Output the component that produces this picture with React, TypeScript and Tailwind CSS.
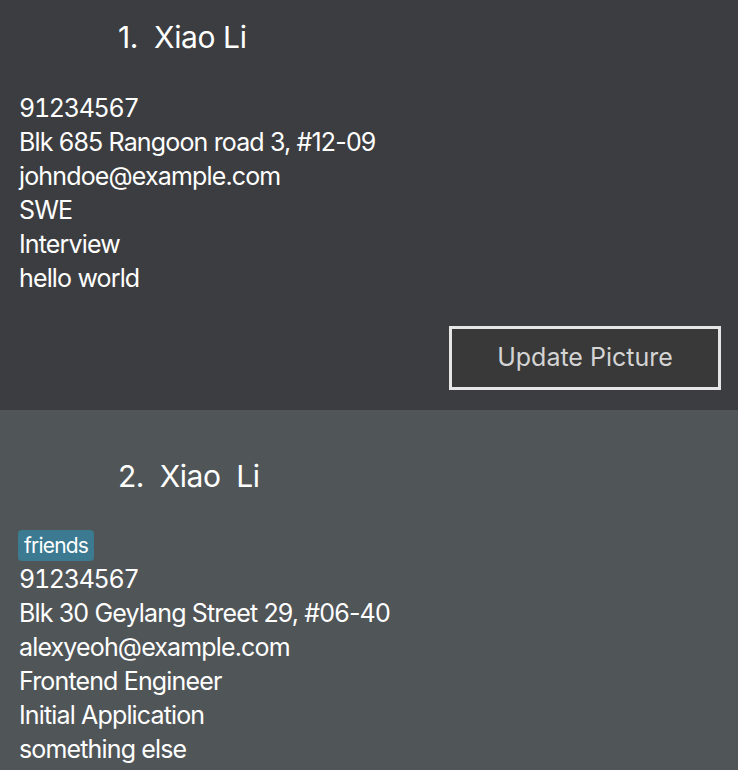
import React from "react";

const font = { fontFamily: "Inter, 'Noto Sans', sans-serif" };

function Line({ children, tab }: { children: React.ReactNode; tab?: boolean }) {
  return (
    <div
      className={
        tab
          ? "h-[34px] leading-[34px] text-[25px] tracking-[-1.3px] tabular-nums text-white whitespace-nowrap"
          : "h-[34px] leading-[34px] text-[25px] tracking-[-0.85px] text-white whitespace-nowrap"
      }
    >
      {children}
    </div>
  );
}

export default function App() {
  return (
    <div style={font} className="w-[738px] h-[770px] overflow-hidden">
      <div className="bg-[#3c3d40] h-[410px] flex flex-col px-[19px] pt-[22px]">
        <div className="h-[30px] leading-[30px] pl-[99px] text-[30px] tracking-[-0.4px] text-white whitespace-pre">
          1.  Xiao Li
        </div>
        <div className="mt-[39px] flex flex-col">
          <Line tab>91234567</Line>
          <Line>Blk 685 Rangoon road 3, #12-09</Line>
          <Line>johndoe@example.com</Line>
          <Line>SWE</Line>
          <Line>Interview</Line>
          <Line>hello world</Line>
        </div>
        <div className="flex justify-end mt-[31px] -mr-[2px]">
          <button className="w-[272px] h-[64px] border-[3px] border-[#e6e6e6] bg-[#393939] text-[#d4d4d4] text-[25px]">
            Update Picture
          </button>
        </div>
      </div>
      <div className="bg-[#505558] h-[360px] flex flex-col px-[19px] pt-[51px]">
        <div className="h-[30px] leading-[30px] pl-[99px] text-[30px] tracking-[-0.5px] text-white whitespace-pre">
          2.  Xiao  Li
        </div>
        <div className="mt-[39px] flex">
          <span className="bg-[#3b7a90] rounded-[4px] px-[6px] h-[31px] leading-[31px] text-[21px] tracking-[-0.8px] text-white -ml-[1px]">friends</span>
        </div>
        <div className="flex flex-col mt-[1px]">
          <Line tab>91234567</Line>
          <Line>Blk 30 Geylang Street 29, #06-40</Line>
          <Line>alexyeoh@example.com</Line>
          <Line>Frontend Engineer</Line>
          <Line>Initial Application</Line>
          <Line>something else</Line>
        </div>
      </div>
    </div>
  );
}
